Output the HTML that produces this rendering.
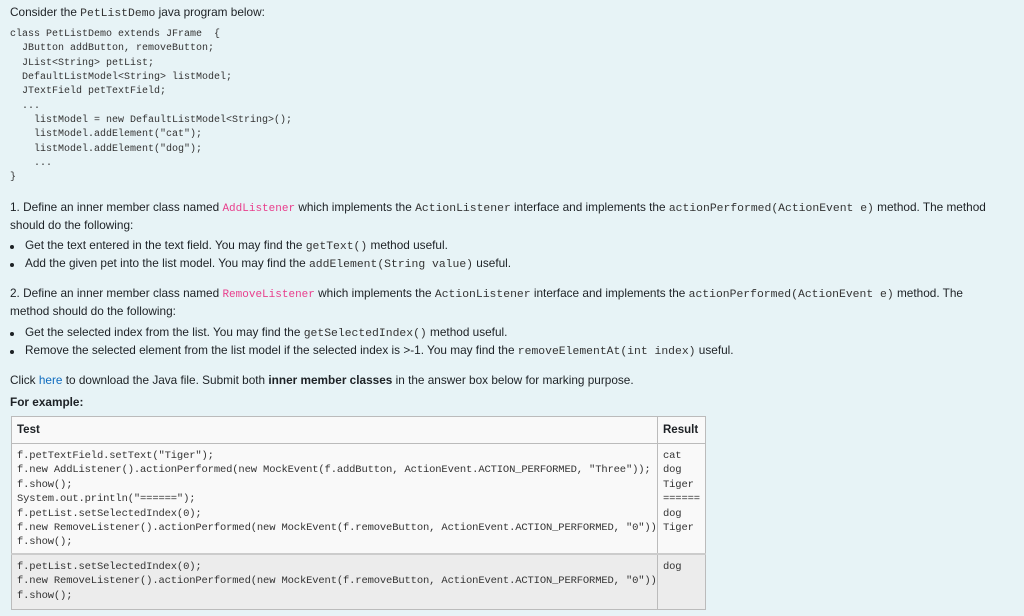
<!DOCTYPE html>
<html><head><meta charset="utf-8"><style>
body{margin:0;width:1024px;height:616px;background:#e7f3f6;font-family:"Liberation Sans",sans-serif;font-size:11.8px;color:#1d2125;position:relative;overflow:hidden}
.l{position:absolute;white-space:nowrap;left:10px}
code{font-family:"Liberation Mono",monospace;font-size:11.4px;color:#333}
.pk{font-family:"Liberation Mono",monospace;color:#e83e8c;font-size:11px}
pre{position:absolute;margin:0;left:10px;top:28px;font-family:"Liberation Mono",monospace;font-size:10px;line-height:14.35px;color:#333}
.dot{position:absolute;left:10px;top:7px;width:4px;height:4px;border-radius:50%;background:#1d2125}
a{color:#0f6cbf;text-decoration:none}
table{position:absolute;left:11px;top:416px;border-collapse:collapse;width:694px;table-layout:fixed}
td,th{border:1px solid #bbb;vertical-align:top;padding:0 5px;white-space:nowrap;overflow:hidden}
th{text-align:left;height:26px;font-size:11.5px;background:#f9f9f9;vertical-align:middle}
td{font-family:"Liberation Mono",monospace;font-size:10.5px;line-height:14.4px;color:#333;letter-spacing:-0.15px}
tr.r1 td{background:#f9f9f9;padding-top:5px;padding-bottom:3px}
tr.r2 td{background:#ececec;padding-top:5px;padding-bottom:6px;border-top:2px solid #ccc}
</style></head><body>
<div class="l" style="top:5px">Consider the <code>PetListDemo</code> java program below:</div>
<pre>class PetListDemo extends JFrame  {
  JButton addButton, removeButton;
  JList&lt;String&gt; petList;
  DefaultListModel&lt;String&gt; listModel;
  JTextField petTextField;
  ...
    listModel = new DefaultListModel&lt;String&gt;();
    listModel.addElement("cat");
    listModel.addElement("dog");
    ...
}</pre>
<div class="l" style="top:200px">1. Define an inner member class named <span class="pk">AddListener</span> which implements the <code>ActionListener</code> interface and implements the <code>actionPerformed(ActionEvent e)</code> method. The method</div>
<div class="l" style="top:218px">should do the following:</div>
<div class="l" style="top:238px;left:0"><span class="dot"></span><span style="position:relative;left:25px">Get the text entered in the text field. You may find the <code>getText()</code> method useful.</span></div>
<div class="l" style="top:256px;left:0"><span class="dot"></span><span style="position:relative;left:25px">Add the given pet into the list model. You may find the <code>addElement(String value)</code> useful.</span></div>
<div class="l" style="top:286px">2. Define an inner member class named <span class="pk">RemoveListener</span> which implements the <code>ActionListener</code> interface and implements the <code>actionPerformed(ActionEvent e)</code> method. The</div>
<div class="l" style="top:304px">method should do the following:</div>
<div class="l" style="top:325px;left:0"><span class="dot"></span><span style="position:relative;left:25px">Get the selected index from the list. You may find the <code>getSelectedIndex()</code> method useful.</span></div>
<div class="l" style="top:343px;left:0"><span class="dot"></span><span style="position:relative;left:25px">Remove the selected element from the list model if the selected index is &gt;-1. You may find the <code>removeElementAt(int index)</code> useful.</span></div>
<div class="l" style="top:373px">Click <a>here</a> to download the Java file. Submit both <b>inner member classes</b> in the answer box below for marking purpose.</div>
<div class="l" style="top:395px"><b>For example:</b></div>
<table>
<colgroup><col style="width:646px"><col style="width:48px"></colgroup>
<tr><th>Test</th><th>Result</th></tr>
<tr class="r1"><td>f.petTextField.setText("Tiger");<br>f.new AddListener().actionPerformed(new MockEvent(f.addButton, ActionEvent.ACTION_PERFORMED, "Three"));<br>f.show();<br>System.out.println("======");<br>f.petList.setSelectedIndex(0);<br>f.new RemoveListener().actionPerformed(new MockEvent(f.removeButton, ActionEvent.ACTION_PERFORMED, "0"));<br>f.show();</td><td>cat<br>dog<br>Tiger<br>======<br>dog<br>Tiger</td></tr>
<tr class="r2"><td>f.petList.setSelectedIndex(0);<br>f.new RemoveListener().actionPerformed(new MockEvent(f.removeButton, ActionEvent.ACTION_PERFORMED, "0"));<br>f.show();</td><td>dog</td></tr>
</table>
</body></html>
